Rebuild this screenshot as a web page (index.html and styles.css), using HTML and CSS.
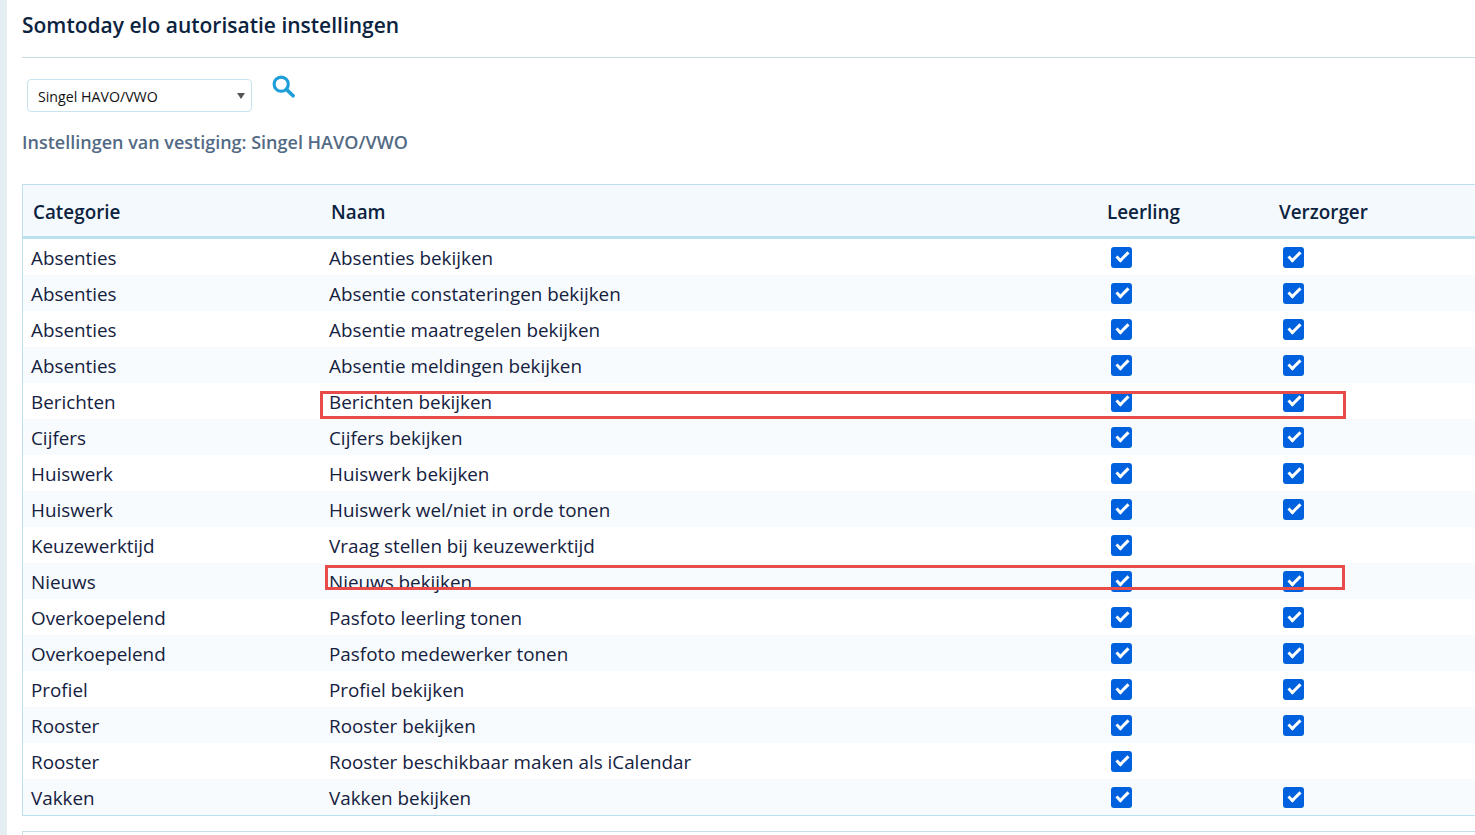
FILE: index.html
```html
<!DOCTYPE html>
<html lang="nl">
<head>
    <meta charset="UTF-8">
    <title>Somtoday elo autorisatie instellingen</title>
    <link rel="stylesheet" href="styles.css">
</head>
<body>
    <div class="side-strip"></div>
    <div class="content">
        <h1 class="page-title">Somtoday elo autorisatie instellingen</h1>

        <form class="search-row">
            <div class="select-wrap">
                <select class="location-select">
                    <option>Singel HAVO/VWO</option>
                </select>
            </div>
            <button type="button" class="search-button" aria-label="Zoeken">
                <svg width="23" height="23" viewBox="0 0 24 24" fill="none" stroke="#1d9ed8">
                    <circle cx="9.6" cy="9.6" r="7.4" stroke-width="3.2"/>
                    <path d="M15 15l7 6.6" stroke-width="3.8" stroke-linecap="round"/>
                </svg>
            </button>
        </form>

        <h2 class="sub-title">Instellingen van vestiging: Singel HAVO/VWO</h2>

        <table class="rights-table">
            <colgroup>
                <col class="col-category">
                <col class="col-name">
                <col class="col-role">
                <col class="col-role">
                <col>
            </colgroup>
            <thead>
                <tr>
                    <th>Categorie</th>
                    <th>Naam</th>
                    <th>Leerling</th>
                    <th>Verzorger</th>
                    <th></th>
                </tr>
            </thead>
            <tbody>
                <tr><td>Absenties</td><td>Absenties bekijken</td><td><input type="checkbox" checked></td><td><input type="checkbox" checked></td><td></td></tr>
                <tr><td>Absenties</td><td>Absentie constateringen bekijken</td><td><input type="checkbox" checked></td><td><input type="checkbox" checked></td><td></td></tr>
                <tr><td>Absenties</td><td>Absentie maatregelen bekijken</td><td><input type="checkbox" checked></td><td><input type="checkbox" checked></td><td></td></tr>
                <tr><td>Absenties</td><td>Absentie meldingen bekijken</td><td><input type="checkbox" checked></td><td><input type="checkbox" checked></td><td></td></tr>
                <tr><td>Berichten</td><td>Berichten bekijken</td><td><input type="checkbox" checked></td><td><input type="checkbox" checked></td><td></td></tr>
                <tr><td>Cijfers</td><td>Cijfers bekijken</td><td><input type="checkbox" checked></td><td><input type="checkbox" checked></td><td></td></tr>
                <tr><td>Huiswerk</td><td>Huiswerk bekijken</td><td><input type="checkbox" checked></td><td><input type="checkbox" checked></td><td></td></tr>
                <tr><td>Huiswerk</td><td>Huiswerk wel/niet in orde tonen</td><td><input type="checkbox" checked></td><td><input type="checkbox" checked></td><td></td></tr>
                <tr><td>Keuzewerktijd</td><td>Vraag stellen bij keuzewerktijd</td><td><input type="checkbox" checked></td><td></td><td></td></tr>
                <tr><td>Nieuws</td><td>Nieuws bekijken</td><td><input type="checkbox" checked></td><td><input type="checkbox" checked></td><td></td></tr>
                <tr><td>Overkoepelend</td><td>Pasfoto leerling tonen</td><td><input type="checkbox" checked></td><td><input type="checkbox" checked></td><td></td></tr>
                <tr><td>Overkoepelend</td><td>Pasfoto medewerker tonen</td><td><input type="checkbox" checked></td><td><input type="checkbox" checked></td><td></td></tr>
                <tr><td>Profiel</td><td>Profiel bekijken</td><td><input type="checkbox" checked></td><td><input type="checkbox" checked></td><td></td></tr>
                <tr><td>Rooster</td><td>Rooster bekijken</td><td><input type="checkbox" checked></td><td><input type="checkbox" checked></td><td></td></tr>
                <tr><td>Rooster</td><td>Rooster beschikbaar maken als iCalendar</td><td><input type="checkbox" checked></td><td></td><td></td></tr>
                <tr><td>Vakken</td><td>Vakken bekijken</td><td><input type="checkbox" checked></td><td><input type="checkbox" checked></td><td></td></tr>
            </tbody>
        </table>

        <div class="next-box"></div>
    </div>

    <!-- rode kaders over de screenshot -->
    <div class="mark mark-berichten"></div>
    <div class="mark mark-nieuws"></div>
</body>
</html>
```

FILE: styles.css
```css
html, body {
    height: 100%;
    overflow: hidden;
}

body {
    margin: 0;
    display: flex;
    background-color: #ffffff;
    font-family: "Open Sans", Arial, sans-serif;
    color: #0f1f3d;
}

.side-strip {
    flex: 0 0 7px;
    background-color: #e4eef2;
}

.content {
    flex: 1;
    min-width: 0;
    padding-left: 15px;
}

.page-title {
    margin: 0;
    height: 57px;
    box-sizing: content-box;
    border-bottom: 1px solid #c5dde8;
    font-size: 21px;
    font-weight: 600;
    line-height: 51px;
    color: #0c2340;
}

.search-row {
    display: flex;
    align-items: flex-start;
    padding: 21px 0 0 5px;
    height: 41px;
}

.select-wrap {
    position: relative;
    width: 225px;
    height: 33px;
}

.select-wrap::after {
    content: "";
    position: absolute;
    top: 14px;
    right: 7px;
    border-left: 4px solid transparent;
    border-right: 4px solid transparent;
    border-top: 6px solid #555555;
}

.location-select {
    appearance: none;
    width: 100%;
    height: 100%;
    padding: 2px 0 0 10px;
    background-color: #ffffff;
    border: 1px solid #c9e4f0;
    border-radius: 4px;
    font-family: "Open Sans", Arial, sans-serif;
    font-size: 14.2px;
    color: #111111;
}

.search-button {
    margin: -4px 0 0 20px;
    padding: 0;
    border: none;
    background: none;
    line-height: 0;
}

.sub-title {
    margin: 0;
    height: 55px;
    padding-top: 9px;
    box-sizing: content-box;
    font-size: 18px;
    font-weight: 600;
    line-height: 26px;
    color: #536a85;
}

.rights-table {
    width: 1500px;
    table-layout: fixed;
    border-collapse: separate;
    border-spacing: 0;
    border: 1px solid #bde0ef;
    border-right: none;
    font-size: 18.85px;
}

.col-category {
    width: 298px;
}

.col-name {
    width: 778px;
}

.col-role {
    width: 172px;
}

.rights-table th {
    height: 49px;
    padding: 2px 0 0 10px;
    background-color: #f4f9fd;
    border-bottom: 3px solid #bde0ef;
    box-sizing: content-box;
    text-align: left;
    font-size: 18.85px;
    font-weight: 600;
    color: #0c2340;
}

.rights-table th:nth-child(n+3) {
    padding-left: 8px;
}

.rights-table td {
    height: 36px;
    padding: 2px 0 0 8px;
    box-sizing: border-box;
    color: #14213f;
}

.rights-table td:nth-child(n+3) {
    padding-left: 12px;
}

.rights-table tbody tr:nth-child(even) td {
    background-color: #f8fbfd;
}

.rights-table input {
    appearance: none;
    position: relative;
    display: block;
    width: 21px;
    height: 21px;
    margin: -1px 0 0;
    background-color: #0061df;
    border-radius: 3px;
}

/* vinkje */
.rights-table input::before {
    content: "";
    position: absolute;
    left: 7.5px;
    top: 1.5px;
    width: 7px;
    height: 13px;
    box-sizing: border-box;
    border-right: 3px solid #ffffff;
    border-bottom: 3px solid #ffffff;
    transform: rotate(45deg);
}

.next-box {
    height: 40px;
    margin-top: 15px;
    border: 1px solid #c5dde8;
    border-right: none;
}

.mark {
    position: absolute;
    box-sizing: border-box;
    border: 3px solid #e84c4a;
}

.mark-berichten {
    left: 320px;
    top: 391px;
    width: 1026px;
    height: 28px;
}

.mark-nieuws {
    left: 325px;
    top: 565px;
    width: 1020px;
    height: 25px;
}
```
